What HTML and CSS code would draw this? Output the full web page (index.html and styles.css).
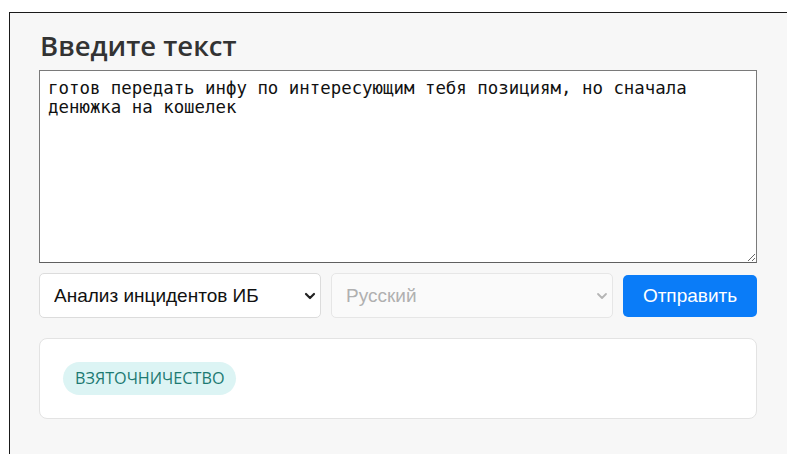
FILE: index.html
```html
<!DOCTYPE html>
<html lang="ru">
<head>
<meta charset="utf-8">
<title>Классификатор текста</title>
<link rel="stylesheet" href="styles.css">
</head>
<body>
<div class="window">
  <main class="panel">
    <h1 class="title">Введите текст</h1>
    <textarea class="input" spellcheck="false">готов передать инфу по интересующим тебя позициям, но сначала денюжка на кошелек</textarea>
    <div class="controls">
      <div class="select-wrap">
        <select class="select">
          <option>Анализ инцидентов ИБ</option>
        </select>
        <svg class="chevron" width="12" height="8" viewBox="0 0 12 8"><path d="M2 2l4 4 4-4" fill="none" stroke="#222" stroke-width="2.2" stroke-linecap="round" stroke-linejoin="round"/></svg>
      </div>
      <div class="select-wrap is-disabled">
        <select class="select" disabled>
          <option>Русский</option>
        </select>
        <svg class="chevron" width="12" height="8" viewBox="0 0 12 8"><path d="M2 2l4 4 4-4" fill="none" stroke="#b5b5b5" stroke-width="1.8" stroke-linecap="round" stroke-linejoin="round"/></svg>
      </div>
      <button class="submit" type="button">Отправить</button>
    </div>
    <section class="result">
      <span class="tag">ВЗЯТОЧНИЧЕСТВО</span>
    </section>
  </main>
</div>
</body>
</html>
```
FILE: styles.css
```css
html, body {
  margin: 0;
  height: 100%;
  background: #ffffff;
  overflow: hidden;
}

body {
  padding: 12px 0 0 9px;
  box-sizing: border-box;
}

.window {
  height: 100%;
  border-top: 1px solid #1a1a1a;
  border-left: 1px solid #1a1a1a;
  background: #f7f7f7;
  box-sizing: border-box;
}

.panel {
  width: 718px;
  padding: 18px 0 0 29px;
  display: flex;
  flex-direction: column;
}

.title {
  margin: 0 0 10px 1px;
  font-family: "Open Sans", sans-serif;
  font-weight: 600;
  font-size: 27.5px;
  line-height: 29px;
  color: #333333;
}

.input {
  display: block;
  width: 718px;
  height: 193px;
  box-sizing: border-box;
  margin: 0;
  padding: 8px 8px;
  border: 1px solid #7a7a7a;
  border-bottom-color: #5f5f5f;
  border-radius: 0;
  background: #ffffff;
  font-family: "DejaVu Sans Mono", monospace;
  font-size: 17.4px;
  line-height: 19px;
  color: #111111;
  resize: both;
  outline: none;
}

.controls {
  display: flex;
  gap: 10px;
  align-items: center;
  margin-top: 10px;
}

.select-wrap {
  position: relative;
  width: 282px;
  height: 45px;
}

.select {
  appearance: none;
  -webkit-appearance: none;
  width: 100%;
  height: 100%;
  box-sizing: border-box;
  margin: 0;
  padding: 0 30px 0 14px;
  border: 1px solid #dcdcdc;
  border-radius: 5px;
  background: #ffffff;
  font-family: "Liberation Sans", Arial, sans-serif;
  font-size: 19px;
  color: #111111;
}

.is-disabled .select {
  background: #fafafa;
  border-color: #e6e6e6;
  color: #b0b0b0;
  opacity: 1;
}

.chevron {
  position: absolute;
  right: 5px;
  top: 19px;
  pointer-events: none;
}

.submit {
  width: 134px;
  height: 42px;
  margin: 0;
  border: 0;
  border-radius: 5px;
  background: #0a7cf8;
  color: #ffffff;
  font-family: "Liberation Sans", Arial, sans-serif;
  font-size: 19px;
  cursor: pointer;
}

.result {
  margin-top: 20px;
  height: 81px;
  box-sizing: border-box;
  padding: 23px 23px;
  border: 1px solid #e3e3e3;
  border-radius: 8px;
  background: #ffffff;
}

.tag {
  display: inline-block;
  height: 33px;
  line-height: 33px;
  padding: 0 12px;
  border-radius: 17px;
  background: #dcf4f4;
  color: #1c7a72;
  font-family: "Open Sans", sans-serif;
  font-size: 16.2px;
}
```
